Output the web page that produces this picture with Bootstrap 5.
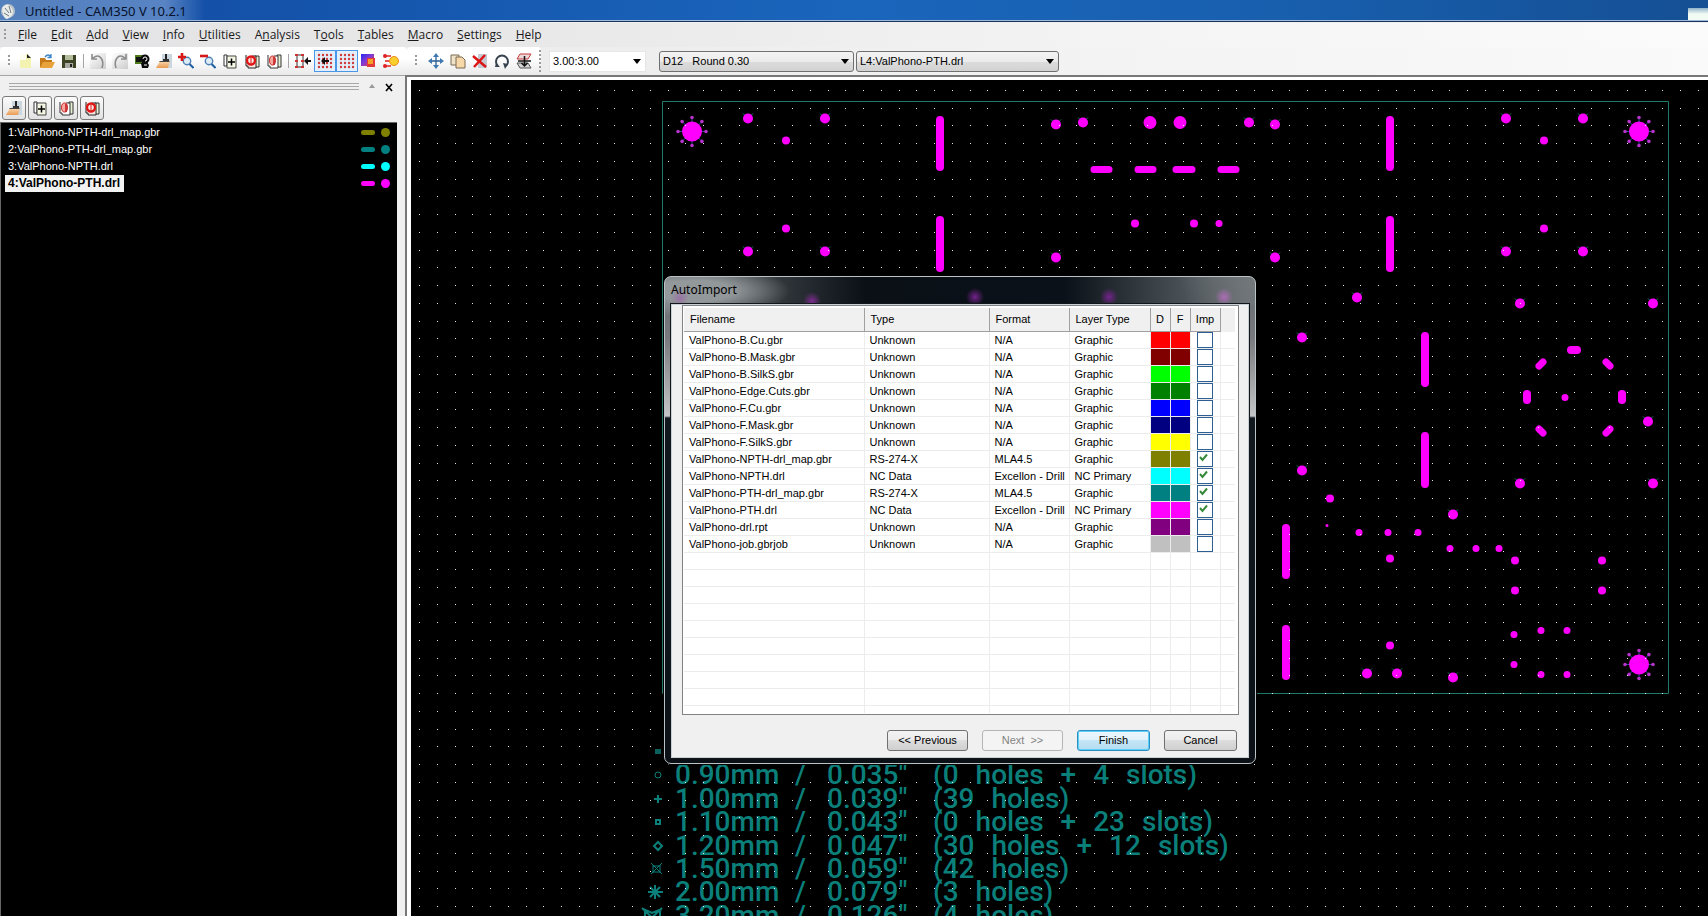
<!DOCTYPE html>
<html lang="en">
<head>
<meta charset="utf-8">
<meta name="viewport" content="width=device-width, initial-scale=1">
<title>Untitled - CAM350 V 10.2.1</title>
<link href="https://cdn.jsdelivr.net/npm/bootstrap@5.3.0/dist/css/bootstrap.min.css" rel="stylesheet">
<style>
  :root { --face: #f0f0f0; --teal: #0b7f7a; }
  body { font: 11px/17px "Liberation Sans", Arial, sans-serif; color: #000; background: var(--face); }
  svg { display: block; }

  /* window caption */
  .caption { height: 22px; font: 13px/20px "Noto Sans", sans-serif; color: #06122c;
    border-bottom: 1px solid #18355f; box-shadow: inset 0 -1px #9fb9d8;
    background:
      linear-gradient(#8fb4c8, #f2fbf4 6px) right bottom / 20px 13px no-repeat,
      linear-gradient(90deg, rgba(150,180,220,.5), rgba(125,160,212,.65) 165px, transparent 205px),
      linear-gradient(90deg, #124c9f, #1450a8 200px, #1a66bc 50%, #185fae 75%, #154f94); }

  /* menu */
  .menu-strip { height: 24px; padding-left: 4px; margin-top: 1px;
    background: linear-gradient(90deg, #e3e3e5, #e8e8e8 30%, #f4f4f4 65%, #fbfbfb); }
  .menu-strip .nav-link { font: 12px/16px "Open Sans", sans-serif; color: #1a1a1a; padding: 0; }
  .menu-items { gap: 14px; margin-left: 12px; }
  .grip { width: 2px; height: 12px; background: repeating-linear-gradient(#9a9a9a 0 2px, transparent 2px 4px); }
  .grip.tall { height: 22px; }

  /* toolbars */
  .tool-strip { height: 28px; background: linear-gradient(90deg, #e9e9e9, #eee 40%, #fafafa); }
  .tool-group { height: 28px; padding: 0 5px 0 4px; background: linear-gradient(#fff 40%, #e9e9e9); border-radius: 4px; }
  .tool { width: 22px; height: 22px; padding: 2px; border: 1px solid transparent; border-radius: 0; background: none; line-height: 1; }
  .tool.on { border-color: #4a97ea; background: #e3effb; }
  .bar-sep { width: 1px; height: 14px; margin: 0 3px; background: #a5a5a5; }
  .combo { height: 21px; font: 11px/17px "Liberation Sans", Arial, sans-serif; color: #000; padding: 0 20px 0 3px;
    border: 1px solid #707070; border-radius: 3px; appearance: none;
    background: url("data:image/svg+xml,%3Csvg xmlns='http://www.w3.org/2000/svg' width='8' height='5'%3E%3Cpath d='M0 0h8L4 5z'/%3E%3C/svg%3E") no-repeat right 4px center,
      linear-gradient(#f3f3f3, #ebebeb 50%, #dcdcdc 50%, #d2d2d2); }
  .combo.flat { border-color: #e6e6e6; border-radius: 0; background-color: #fff;
    background-image: url("data:image/svg+xml,%3Csvg xmlns='http://www.w3.org/2000/svg' width='8' height='5'%3E%3Cpath d='M0 0h8L4 5z'/%3E%3C/svg%3E"); }
  #gridSel { width: 97px; margin-left: 8px; }
  #dcodeSel { width: 195px; margin: 0 2px 0 13px; }
  #layerSel { width: 203px; }

  /* layer panel */
  .layers { width: 405px; flex: none; border-top: 1px solid #a5a5a5; }
  .dock-lines { height: 8px; margin: 7px 10px 0 9px; background: repeating-linear-gradient(#a8a8a8 0 1px, transparent 1px 3px); }
  .dock-close { width: 12px; height: 14px; margin: 4px 10px 0 8px; padding: 0; border: 0; background: none; }
  .panel-tools { gap: 2px; padding: 2px 0 2px 2px; }
  .panel-tool { width: 24px; height: 24px; padding: 3px; border: 1px solid #7b7b7b; border-radius: 3px;
    background: linear-gradient(#fbfbfb, #e2e2e2); line-height: 1; }
  .layer-list { background: #000; color: #fff; border: 1px solid #666; border-right: 0; border-bottom: 0; margin-right: 8px; padding-top: 1px; }
  .layer-row { height: 17px; padding: 0 7px 0 4px; }
  .layer-name { padding: 0 4px 0 3px; color: inherit; text-decoration: none; line-height: 17px; }
  .layer-name.current { background: #f2f2f2; color: #000; font-size: 12px; font-weight: bold; }
  .sw-line { width: 14px; height: 5px; border-radius: 3px; margin-right: 6px; }
  .sw-dot { width: 9px; height: 9px; border-radius: 50%; }

  /* drawing area */
  .work { min-height: 0; }
  .view-frame { border-top: 2px solid #777; border-left: 2px solid #777; min-width: 0; }
  .view { background: #000; border-top: 3px solid #fff; border-left: 4px solid #fff; }
  .board-svg { pointer-events: none; }
  .legend { position: absolute; left: 226px; top: 660px; height: 187px; color: var(--teal); font: 500 28px/23px Roboto, sans-serif; white-space: nowrap; }
  .legend svg { width: 38px; height: 23px; }
  .lg-mm { width: 120px; } .lg-sl { width: 32px; } .lg-in { width: 106px; }
  .lg-words { gap: 17px; }

  /* dialog */
  .dlg { position: absolute; left: 664px; top: 276px; width: 592px; padding: 0 6px 5px; border: 1px solid #b9c3c6; border-radius: 7px;
    box-shadow: 0 0 0 1px #000;
    background:
      radial-gradient(circle 9px at 15px 21px, rgba(160,60,180,.4), transparent),
      radial-gradient(circle 9px at 147px 24px, rgba(145,45,165,.8), transparent),
      radial-gradient(circle 9px at 310px 20px, rgba(125,35,150,.9), transparent),
      radial-gradient(circle 9px at 444px 20px, rgba(125,35,150,.9), transparent),
      radial-gradient(circle 9px at 559px 20px, rgba(190,110,200,.8), transparent),
      radial-gradient(ellipse 95px 26px at 30px 14px, rgba(150,155,158,.95) 40%, transparent),
      linear-gradient(65deg, transparent 475px, rgba(120,125,128,.85) 560px) 0 0 / 100% 28px no-repeat,
      linear-gradient(90deg, #666b6e, #0b1017 200px, #0a1118 400px, #50575c 530px, #686d70) 0 0 / 100% 28px no-repeat,
      linear-gradient(#686d70, #77797c 60px, #c2c4c6 139px, #11181e 141px, #0a1016); }
  .dlg-title { font: 12px/16px "Noto Sans", sans-serif; color: #000; height: 27px; margin: 0; padding-top: 5px; }
  .dlg-body { background: var(--face); border: 1px solid #c8d0d3; box-shadow: 0 0 0 1px #10161a; padding: 0 9px 6px 10px; }
  .file-box { background: #fff; border: 1px solid #828282; padding: 2px 3px 1px 1px; }
  .files { width: 100%; table-layout: fixed; border-collapse: collapse; }
  .files .c-type { width: 125px; } .files .c-format { width: 80px; } .files .c-layer { width: 81px; }
  .files .c-color { width: 20px; } .files .c-imp { width: 30px; } .files .c-end { width: 15px; }
  .files th { height: 23px; padding: 0 0 0 6px; font-weight: normal; background: var(--face); border-right: 1px solid #a0a0a0; border-bottom: 1px solid #a0a0a0; }
  .files th:last-child { border-right: 0; border-bottom-color: var(--face); }
  .files th.mid { padding: 0; text-align: center; }
  .files td { height: 17px; line-height: 16px; padding: 0 0 0 5px; border-right: 1px solid #ececec; border-bottom: 1px solid #ececec; white-space: nowrap; }
  .files td:last-child { border-right: 0; }
  .files td.tick { padding: 0 0 0 6px; }
  .files tr.rest td { height: 8px; border-bottom: 0; }
  .box { display: block; appearance: none; width: 16px; height: 16px; margin: 0; border: 1px solid #2d5f93; background: #fff no-repeat 1px 1px; }
  .box:checked { background-image: url("data:image/svg+xml,%3Csvg xmlns='http://www.w3.org/2000/svg' width='9' height='9'%3E%3Cpath d='M1 4l2.500 3L8 1.500' fill='none' stroke='%23358a3a' stroke-width='2'/%3E%3C/svg%3E"); }
  .dlg-btn { width: 73px; height: 21px; padding: 0; font: 11px/17px "Liberation Sans", Arial, sans-serif; color: #000;
    border: 1px solid #707070; border-radius: 3px; background: linear-gradient(#f3f3f3, #ebebeb 50%, #dddddd 50%, #cfcfcf); }
  .dlg-btn.wide { width: 81px; }
  .dlg-btn:disabled { color: #838383; border-color: #b5b5b5; background: #f4f4f4; opacity: 1; }
  .dlg-btn.default { border-color: #2b8fc4; box-shadow: inset 0 0 0 1px #5cd0f5; background: linear-gradient(#edf7fc, #dff1fa 50%, #c5e6f6 50%, #b4dcf0); }
  .dlg-actions { gap: 14px; margin: 15px 2px 0 0; }
</style>
</head>
<body class="d-flex flex-column vh-100 overflow-hidden">

<svg width="0" height="0" class="position-absolute" aria-hidden="true">
  <defs>
    <linearGradient id="hot" x2="1" y2="1"><stop stop-color="#2a2af0"/><stop offset=".5" stop-color="#8a3ad0"/><stop offset="1" stop-color="#f03c20"/></linearGradient>
    <linearGradient id="shade" x2="1" y2="1"><stop stop-color="#fff"/><stop offset="1" stop-color="#b4b4b4"/></linearGradient>
    <linearGradient id="peach" x2="0" y2="1"><stop stop-color="#fbd9b0"/><stop offset="1" stop-color="#e99a52"/></linearGradient>
    <symbol id="i-new" viewBox="0 0 16 16"><path d="M3 1h7l4 4v10H3z" fill="#f4f2b0"/><path d="M3 1h6v6H3z" fill="#fffef0"/><path d="M10 1v4h4z" fill="#222"/></symbol>
    <symbol id="i-open" viewBox="0 0 16 16"><path d="M1 5h5l1 2h6v7H1z" fill="#c47a18"/><path d="M4 9h12l-3 6H1z" fill="#e9a33c"/><path d="M6 4q3-4 6 0M12 1v3.500H8.500" fill="none" stroke="#3b86c8" stroke-width="1.300"/></symbol>
    <symbol id="i-save" viewBox="0 0 16 16"><path d="M1 2h14v13H1z" fill="#3d4426"/><path d="M4 2h8v5H4z" fill="#b4bd9c"/><path d="M4 10h8v5H4z" fill="#a9aaa2"/><path d="M9 11h2v3H9z" fill="#222"/></symbol>
    <symbol id="i-undo" viewBox="0 0 16 16"><path d="M0 0h16v16H0z" fill="url(#shade)" opacity=".6"/><path d="M2 1v5h5M3 5q5-4 8 0t1 10" fill="none" stroke="#8b8b8b" stroke-width="1.600"/></symbol>
    <symbol id="i-redo" viewBox="0 0 16 16"><path d="M0 0h16v16H0z" fill="url(#shade)" opacity=".6"/><path d="M14 1v5H9M13 5q-5-4-8 0T4 15" fill="none" stroke="#8b8b8b" stroke-width="1.600"/></symbol>
    <symbol id="i-query" viewBox="0 0 16 16"><path d="M1 2h10v9H1z" fill="#4f7a1d"/><path d="M2 4h5v5H2z" fill="#111"/><circle cx="11" cy="6" r="4.500" fill="#0a0a0a"/><path d="M7 10l6-1 2 3-1 3H8z" fill="#0a0a0a"/><path d="M9 6q0-2 2-2t2 2-2 2M10 12h3" fill="none" stroke="#fff"/></symbol>
    <symbol id="i-brush" viewBox="0 0 16 16"><path d="M6 1h10v14H6z" fill="#cbd7df"/><path d="M4 8h10l-2 7H0z" fill="url(#peach)"/><path d="M4 8h10l-1 1H3z" fill="#444"/><path d="M9 1h2v7H9z" fill="#222"/><path d="M7 6h6v2H7z" fill="#333"/></symbol>
    <symbol id="i-zin" viewBox="0 0 16 16"><circle cx="9" cy="8" r="3.700" fill="#dcecf8" stroke="#4c7fb4" stroke-width="1.400"/><path d="M11.500 11l4 4" stroke="#1f5fa4" stroke-width="2"/><path d="M0 4h8M4 0v8" stroke="#d81818" stroke-width="2.600"/></symbol>
    <symbol id="i-zout" viewBox="0 0 16 16"><circle cx="9" cy="8" r="3.700" fill="#dcecf8" stroke="#4c7fb4" stroke-width="1.400"/><path d="M11.500 11l4 4" stroke="#1f5fa4" stroke-width="2"/><path d="M0 3h8" stroke="#d81818" stroke-width="2.600"/></symbol>
    <symbol id="i-ladd" viewBox="0 0 16 16"><path d="M2 2h3v11H2z" fill="#fff" stroke="#333"/><path d="M5 3h9v12H5z" fill="#f4f8e4" stroke="#444"/><path d="M9.500 5.500v7M6 9h7" stroke="#000" stroke-width="1.500"/></symbol>
    <symbol id="i-lall" viewBox="0 0 16 16"><path d="M11 3h4v11h-4z" fill="#e6f0d4" stroke="#333"/><path d="M2 2v11h2v2h8V3H8" fill="#fbe9e4" stroke="#222"/><circle cx="7" cy="7.500" r="4" fill="none" stroke="#e01616" stroke-width="2.400"/><path d="M7 5v5" stroke="#e01616"/></symbol>
    <symbol id="i-lone" viewBox="0 0 16 16"><path d="M11 2h4v12h-4z" fill="#e6f0d4" stroke="#333"/><path d="M2 2v11h2v2h8V3H8" fill="#fff" stroke="#333"/><ellipse cx="6.500" cy="7.500" rx="3" ry="4.500" fill="#f6a9a0" stroke="#cc2222"/><path d="M8 4v8" stroke="#c01818" stroke-width="1.500"/></symbol>
    <symbol id="i-snapl" viewBox="0 0 16 16"><path d="M2 2h6v12H2z" fill="none" stroke="#333"/><path d="M0 2h3M0 8h3M0 14h3M6 2h3M6 8h3M6 14h3" stroke="#c33" stroke-width="2"/><path d="M10 8h6" stroke="#111" stroke-width="2"/><path d="M13 4v8L9 8z" fill="#111"/></symbol>
    <symbol id="i-grid" viewBox="0 0 16 16"><g fill="#cf3b3b"><circle cx="2" cy="2" r="1.200"/><circle cx="6" cy="2" r="1.200"/><circle cx="10" cy="2" r="1.200"/><circle cx="14" cy="2" r="1.200"/><circle cx="2" cy="6" r="1.200"/><circle cx="6" cy="6" r="1.200"/><circle cx="10" cy="6" r="1.200"/><circle cx="14" cy="6" r="1.200"/><circle cx="2" cy="10" r="1.200"/><circle cx="6" cy="10" r="1.200"/><circle cx="10" cy="10" r="1.200"/><circle cx="14" cy="10" r="1.200"/><circle cx="2" cy="14" r="1.200"/><circle cx="6" cy="14" r="1.200"/><circle cx="10" cy="14" r="1.200"/><circle cx="14" cy="14" r="1.200"/></g></symbol>
    <symbol id="i-color" viewBox="0 0 16 16"><path d="M0 1h13v12H0z" fill="url(#hot)"/><path d="M6 5h8v9H6z" fill="#e33a3a"/><path d="M7 6h5v5H7z" fill="#f6a12a"/></symbol>
    <symbol id="i-pads" viewBox="0 0 16 16"><path d="M2 3h6M2 8h7M2 13h6" stroke="#d22" stroke-width="1.500"/><circle cx="2" cy="3" r="2" fill="#d22"/><circle cx="2" cy="13" r="2" fill="#d22"/><circle cx="11" cy="8" r="4.500" fill="#f8cf2c" stroke="#ef8b1a"/></symbol>
    <symbol id="i-move" viewBox="0 0 16 16"><path d="M8 2v12M2 8h12" stroke="#2a5f92" stroke-width="1.300"/><path d="M8 0l3 4H5zM8 16l3-4H5zM0 8l4-3v6zM16 8l-4-3v6z" fill="#3f78b0"/></symbol>
    <symbol id="i-copy" viewBox="0 0 16 16"><path d="M1 2h8v10H1z" fill="#efe3c9" stroke="#7a6a50"/><path d="M6 4h6l3 3v8H6z" fill="#f7d8a9" stroke="#7a6a50"/></symbol>
    <symbol id="i-del" viewBox="0 0 16 16"><path d="M6 1h9v14H6z" fill="#c5cbd2"/><path d="M1 3l13 11M13 2L2 14" stroke="#dc1414" stroke-width="2.500"/></symbol>
    <symbol id="i-rot" viewBox="0 0 16 16"><path d="M4 13A6 6 0 1 1 12 13" fill="none" stroke="#37444f" stroke-width="2"/><path d="M9 10l5 1-3 5zM2 10l4 4H1z" fill="#37444f"/></symbol>
    <symbol id="i-flip" viewBox="0 0 16 16"><path d="M4 1h11l-3 5H1z" fill="#eadada" stroke="#c43838"/><path d="M4 15h11l-3-5H1z" fill="#d5d5d5" stroke="#555"/><path d="M8.500 3v9M5.500 10l3 3 3-3M2 8h13" fill="none" stroke="#111" stroke-width="1.500"/></symbol>
  </defs>
</svg>

<header class="caption d-flex align-items-center flex-shrink-0">
  <svg width="17" height="18" viewBox="0 0 17 18" class="me-2" aria-hidden="true"><circle cx="8" cy="9" r="7" fill="#b9c2c6"/><path d="M4 4q3-3 6 0t3 6-4 6-6-4 1-8z" fill="#e9ecea"/><path d="M5 6l4 5M9 4l2 7M4 11l5 3" stroke="#6f7a80" fill="none"/></svg>
  <span>Untitled - CAM350 V 10.2.1</span>
</header>

<nav class="menu-strip d-flex align-items-center flex-shrink-0">
  <span class="grip"></span>
  <div class="nav menu-items flex-nowrap" id="menus"></div>
</nav>

<div class="tool-strip d-flex align-items-center flex-shrink-0">
  <div class="tool-group d-flex align-items-center">
    <span class="grip mx-1"></span>
    <div class="d-flex align-items-center" id="mainTools"></div>
  </div>
  <div class="tool-group d-flex align-items-center pe-0">
    <span class="grip ms-1 me-2"></span>
    <div class="d-flex align-items-center" id="editTools"></div>
    <span class="grip tall ms-1"></span>
  </div>
  <select class="combo flat" id="gridSel" aria-label="Grid"><option>3.00:3.00</option></select>
  <select class="combo" id="dcodeSel" aria-label="D-code"><option>D12 &nbsp; Round 0.30</option></select>
  <select class="combo" id="layerSel" aria-label="Active layer"><option>L4:ValPhono-PTH.drl</option></select>
</div>

<main class="work d-flex flex-fill">
  <aside class="layers d-flex flex-column">
    <div class="d-flex align-items-start">
      <div class="dock-lines flex-fill"></div>
      <svg width="6" height="4" viewBox="0 0 6 4" class="mt-2" aria-hidden="true"><path d="M0 4l3-4 3 4z" fill="#999"/></svg>
      <button type="button" class="dock-close" aria-label="Close"><svg width="12" height="14" viewBox="0 0 12 14"><path d="M3 4l6 7M9 4l-6 7" stroke="#000" stroke-width="1.600"/></svg></button>
    </div>
    <div class="d-flex panel-tools">
      <button type="button" class="panel-tool" aria-label="Redraw"><svg width="16" height="16"><use href="#i-brush"/></svg></button>
      <button type="button" class="panel-tool" aria-label="Add layer"><svg width="16" height="16"><use href="#i-ladd"/></svg></button>
      <button type="button" class="panel-tool" aria-label="One layer"><svg width="16" height="16"><use href="#i-lone"/></svg></button>
      <button type="button" class="panel-tool" aria-label="All layers"><svg width="16" height="16"><use href="#i-lall"/></svg></button>
    </div>
    <div class="layer-list flex-fill" id="layers"></div>
  </aside>
  <section class="view-frame d-flex flex-fill">
    <div class="view flex-fill position-relative overflow-hidden">
      <div class="legend d-flex flex-column" id="legend"></div>
      <svg class="board-svg position-absolute top-0 start-0 w-100 h-100" aria-hidden="true">
        <g id="board" transform="translate(-411 -80)"></g>
      </svg>
    </div>
  </section>
</main>

<div class="dlg" role="dialog" aria-labelledby="dlgTitle">
  <h1 class="dlg-title" id="dlgTitle">AutoImport</h1>
  <div class="dlg-body">
    <div class="file-box">
      <table class="files">
        <colgroup><col><col class="c-type"><col class="c-format"><col class="c-layer"><col class="c-color"><col class="c-color"><col class="c-imp"><col class="c-end"></colgroup>
        <thead><tr><th>Filename</th><th>Type</th><th>Format</th><th>Layer Type</th><th class="mid">D</th><th class="mid">F</th><th class="mid">Imp</th><th></th></tr></thead>
        <tbody id="files"></tbody>
      </table>
    </div>
    <div class="dlg-actions d-flex justify-content-end">
      <button type="button" class="dlg-btn wide">&lt;&lt; Previous</button>
      <button type="button" class="dlg-btn wide" disabled>Next &nbsp;&gt;&gt;</button>
      <button type="button" class="dlg-btn default">Finish</button>
      <button type="button" class="dlg-btn">Cancel</button>
    </div>
  </div>
</div>

<script>
  const $ = id => document.getElementById(id);

  // Menus: the underscore marks the access key
  $('menus').innerHTML = '_File _Edit _Add _View _Info _Utilities A_nalysis T_ools _Tables _Macro _Settings _Help'.split(' ')
    .map(m => `<a class="nav-link" href="#">${m.replace(/_(.)/, '<u>$1</u>')}</a>`).join('');

  const tool = t => {
    if (t === '|') return '<span class="bar-sep"></span>';
    const on = t.endsWith('!'), id = t.replace('!', '');
    const arrow = id === 'snapg' ? '<path d="M7 8h5" stroke="#111" stroke-width="2"/><path d="M8 4v8L4 8z" fill="#111"/>' : '';
    const use = id === 'snapg' ? 'grid' : id;
    return `<button type="button" class="tool${on ? ' on' : ''}" aria-label="${id}"><svg width="16" height="16"><use href="#i-${use}"/>${arrow}</svg></button>`;
  };
  $('mainTools').innerHTML = 'new open save | undo redo query brush zin zout ladd lall lone | snapl snapg! grid! color pads'.split(' ').map(tool).join('');
  $('editTools').innerHTML = 'move copy del rot flip'.split(' ').map(tool).join('');

  $('layers').innerHTML = [['1:ValPhono-NPTH-drl_map.gbr', '#808000'], ['2:ValPhono-PTH-drl_map.gbr', '#008080'],
    ['3:ValPhono-NPTH.drl', '#00ffff'], ['4:ValPhono-PTH.drl', '#ff00ff']]
    .map(([n, c], i) => `<div class="layer-row d-flex align-items-center"><a href="#" class="layer-name${i === 3 ? ' current' : ''}">${n}</a>
      <span class="sw-line ms-auto" style="background:${c}"></span><span class="sw-dot" style="background:${c}"></span></div>`).join('');

  const files = [
    ['B.Cu.gbr', '#ff0000'], ['B.Mask.gbr', '#800000'], ['B.SilkS.gbr', '#00ff00'], ['Edge.Cuts.gbr', '#008000'],
    ['F.Cu.gbr', '#0000ff'], ['F.Mask.gbr', '#000080'], ['F.SilkS.gbr', '#ffff00'],
    ['NPTH-drl_map.gbr', '#808000', 'RS-274-X', 'MLA4.5', 'Graphic', 1],
    ['NPTH.drl', '#00ffff', 'NC Data', 'Excellon - Drill', 'NC Primary', 1],
    ['PTH-drl_map.gbr', '#008080', 'RS-274-X', 'MLA4.5', 'Graphic', 1],
    ['PTH.drl', '#ff00ff', 'NC Data', 'Excellon - Drill', 'NC Primary', 1],
    ['drl.rpt', '#800080'], ['job.gbrjob', '#c0c0c0']];
  const blank = '<td></td>'.repeat(8);
  $('files').innerHTML = files.map(([n, c, t = 'Unknown', f = 'N/A', l = 'Graphic', on]) =>
    `<tr><td>ValPhono-${n}</td><td>${t}</td><td>${f}</td><td>${l}</td><td style="background-color:${c}"></td><td style="background-color:${c}"></td>
     <td class="tick"><input type="checkbox" class="box" aria-label="Import ValPhono-${n}"${on ? ' checked' : ''}></td><td></td></tr>`).join('')
    + `<tr>${blank}</tr>`.repeat(9) + `<tr class="rest">${blank}</tr>`;

  // Drill table of the map layer
  const S = 'fill="none" stroke="#0b7f7a"';
  const legend = [
    ['<path d="M18 9h6v5h-6z" fill="#0b5f5c"/>'],
    [`<circle cx="21" cy="12" r="3" ${S}/>`, '0.90mm', '0.035"', '(0 holes + 4 slots)'],
    [`<path d="M17 12h8M21 8v8" ${S} stroke-width="2"/>`, '1.00mm', '0.039"', '(39 holes)'],
    [`<path d="M19 10h4v4h-4z" ${S} stroke-width="2"/>`, '1.10mm', '0.043"', '(0 holes + 23 slots)'],
    [`<path d="M21 8l4 4-4 4-4-4z" ${S} stroke-width="2"/>`, '1.20mm', '0.047"', '(30 holes + 12 slots)'],
    [`<path d="M14 6l11 11M25 6L14 17M16 8v8M23 8v8M16 9h7M16 15h7" ${S}/>`, '1.50mm', '0.059"', '(42 holes)'],
    [`<path d="M18 5v14M11 12h15M13 7l10 10M23 7L13 17" ${S} stroke-width="2"/>`, '2.00mm', '0.079"', '(3 holes)'],
    [`<path d="M5 4l20 19M25 4L5 23M8 7v15M23 7v15M6 5l9 4 10-4" ${S} stroke-width="2"/>`, '3.20mm', '0.126"', '(4 holes)']];
  $('legend').innerHTML = legend.map(([mark, mm, inch, count]) => `<div class="d-flex flex-fill"><svg>${mark}</svg>` + (mm ?
    `<span class="lg-mm">${mm}</span><span class="lg-sl">/</span><span class="lg-in">${inch}</span>
     <span class="lg-words d-flex">${count.split(' ').map(w => `<span>${w}</span>`).join('')}</span>` : '') + '</div>').join('');

  // Board outline, drills, slots and snap grid
  const M = 'fill="#ff00ff"';
  let out = '<path d="M662.500 101.500H1668.500V693.500H662.500z" fill="none" stroke="#1f7a6c"/>';
  const round = (r, pts) => pts.forEach(([x, row]) => {
    const y = row + .5;
    if (r === 5) out += `<path d="M${x - 5} ${y - 5}l3 3M${x + 5} ${y - 5}l-3 3" stroke="#1f7a6c"/>`;
    out += `<circle cx="${x}" cy="${y}" r="${r}" ${M}/>`;
  });
  round(5, [[748,118],[825,118],[748,251],[825,251],[1056,124],[1083,122],[1056,257],[1249,122],[1275,124],[1275,257],
    [1506,118],[1583,118],[1506,251],[1583,251],[1357,297],[1520,303],[1653,303],[1302,337],[1302,470],[1520,483],[1653,483],
    [1453,514],[1367,673],[1397,673],[1453,677],[1648,421]]);
  round(6.5, [[1150,122],[1180,122]]);
  round(4, [[786,140],[786,228],[1544,140],[1544,228],[1135,223],[1194,223],[1330,498],[1390,558],[1515,560],[1515,590],[1602,560],[1602,590],[1390,645]]);
  round(3.5, [[1219,223],[1565,397],[1359,532],[1388,532],[1418,532],[1450,548],[1476,548],[1499,548],[1514,634],[1514,664],[1541,630],[1567,630],[1541,674],[1567,674]]);
  round(1.5, [[1327,525]]);
  [[692,131.5],[1639,131.5],[1639,664.5]].forEach(([x, y]) => {
    for (let k = 0; k < 8; k++) {
      const a = k * Math.PI / 4, cx = x + 14 * Math.cos(a), cy = y + 14 * Math.sin(a);
      out += `<path d="M${x} ${y}L${cx} ${cy}" stroke="#2b4f9a"/><circle cx="${cx}" cy="${cy}" r="1.800" fill="#b832cc"/>`;
    }
    out += `<circle cx="${x}" cy="${y}" r="10" ${M}/>`;
  });
  const slot = (x1, y1, x2, y2, w) => out += `<path d="M${x1} ${y1}L${x2} ${y2}" stroke="#ff00ff" stroke-width="${w}" stroke-linecap="round"/>`;
  [[940,116,171],[940,216,272],[1390,116,171],[1390,216,272],[1425,332,387],[1425,432,488],[1286,524,579],[1286,625,680]]
    .forEach(([x, a, b]) => slot(x, a + 4, x, b - 4, 8));
  [[1091,1112],[1135,1156],[1173,1195],[1218,1239]].forEach(([a, b]) => slot(a + 3, 169.5, b - 3, 169.5, 7));
  slot(1571,350,1577,350,8); slot(1527,394,1527,400,8); slot(1622,394,1622,400,8);
  slot(1539,366,1543,362,7); slot(1606,362,1610,366,7); slot(1539,429,1543,433,7); slot(1606,433,1610,429,7);
  let dots = '';
  for (let j = 0; j < 120; j++) for (let i = 0; i < 220; i++)
    dots += `M${Math.round(419 + i * 17.764)} ${Math.round(90 + j * 17.74)}h1v1h-1z`;
  $('board').innerHTML = out + `<path d="${dots}" fill="#e8e8e8" shape-rendering="crispEdges"/>`;
</script>
<script src="https://cdn.jsdelivr.net/npm/bootstrap@5.3.0/dist/js/bootstrap.bundle.min.js"></script>
</body>
</html>
